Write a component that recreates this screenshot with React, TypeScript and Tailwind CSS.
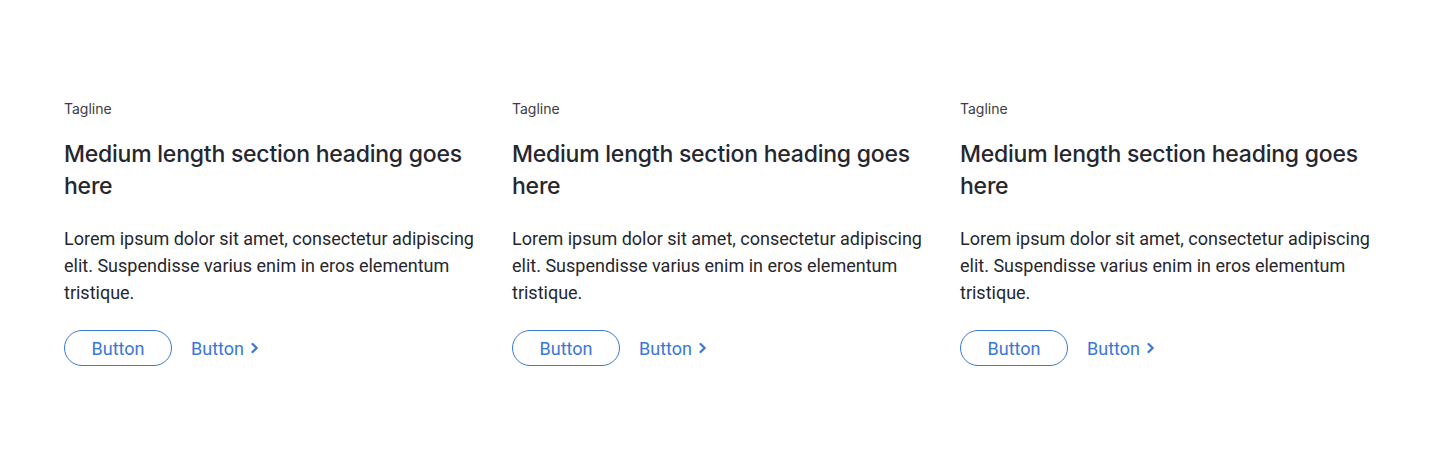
const cols = [0, 1, 2];

function Chevron() {
  return (
    <svg width="11" height="12" viewBox="0 0 11 12" fill="none" stroke="currentColor" strokeWidth="2.3" strokeLinecap="round" strokeLinejoin="round">
      <path d="M3.5 2l4.2 4-4.2 4" />
    </svg>
  );
}

export default function App() {
  return (
    <main className="min-h-screen bg-white px-16 pt-[97px] pb-24">
      <div className="grid grid-cols-3 gap-8">
        {cols.map(i => (
          <div key={i} className="flex flex-col">
            <p className="font-['Inter',sans-serif] text-[14px] leading-6 text-[#3a3c42] mb-4">Tagline</p>
            <h2 className="font-['Inter',sans-serif] text-[23px] leading-8 font-medium tracking-[-0.01em] text-[#25272e] mt-px">Medium length section heading goes here</h2>
            <p className="font-['Roboto',sans-serif] text-[18px] leading-[27px] text-[#25272e] mt-[23px]">Lorem ipsum dolor sit amet, consectetur adipiscing elit. Suspendisse varius enim in eros elementum tristique.</p>
            <div className="flex items-center gap-[19px] mt-6 font-['Roboto',sans-serif] text-[18px] text-[#3a78d6]">
              <button className="h-9 w-[108px] rounded-full border border-[#3a78d6]">Button</button>
              <a className="flex items-center gap-[5px]">Button<Chevron /></a>
            </div>
          </div>
        ))}
      </div>
    </main>
  );
}
